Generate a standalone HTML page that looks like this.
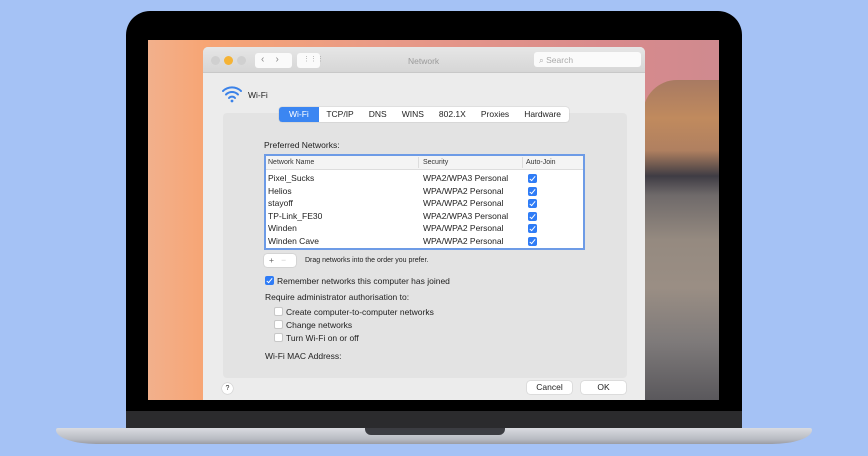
<!DOCTYPE html>
<html><head><style>
*{margin:0;padding:0;box-sizing:border-box}
body{width:868px;height:456px;background:#a5c2f5;position:relative;overflow:hidden;font-family:"Liberation Sans",sans-serif;color:#222}
.abs{position:absolute}
.bezel{left:126px;top:11px;width:616px;height:420px;background:#000;border-radius:24px 24px 0 0}
.chin{left:126px;top:411px;width:616px;height:18px;background:#2b2b2d}
.base{left:56px;top:428px;width:756px;height:16px;background:linear-gradient(#d9dbe0,#b8bbc2 70%,#9a9ca3);border-radius:2px 2px 40px 40px/2px 2px 14px 14px}
.notch{left:365px;top:428px;width:140px;height:7px;background:#3c3d42;border-radius:0 0 6px 6px}
.screen{left:148px;top:40px;width:571px;height:360px;background:linear-gradient(90deg,#f2b08c,#f7a574 10%,#e99a86 40%,#d98a8c 80%,#cf8a8f);overflow:hidden}
.rock{left:495px;top:40px;width:76px;height:320px;background:linear-gradient(180deg,#a87a62 0,#c08a5e 12%,#b08060 22%,#3f3c44 30%,#6f6a6a 36%,#958a80 50%,#9a8e84 65%,#7e7a7a 82%,#5a585c 100%);border-radius:34px 0 0 0}
.win{left:55px;top:7px;width:442px;height:360px;background:#ececec;border-radius:5px 5px 0 0;overflow:hidden}
.title{left:0;top:0;width:442px;height:26px;background:linear-gradient(#e6e6e6,#d6d6d6);border-bottom:1px solid #c8c8c8}
.dot{width:9px;height:9px;border-radius:50%;top:9px;background:#d0d0d0}
.btn{background:#fafafa;border-radius:3px;height:15px;top:6px}
.t{font-size:8.5px;white-space:nowrap}
.group{left:20px;top:66px;width:404px;height:265px;background:#e3e3e3;border-radius:4px}
.tabs{left:76px;top:60px;height:15px;background:#fff;border-radius:3px;box-shadow:0 0 1px #999;display:flex;font-size:8.5px}
.tabs span{padding:2px 7.5px;line-height:11px}
.table{left:61px;top:107px;width:321px;height:96px;border:2px solid #6d9be6;background:#fff}
.hdr{height:14px;background:#f4f4f4;border-bottom:1px solid #ddd;font-size:7px;color:#333}
.row{height:12.6px;font-size:8.5px;position:relative}
.cb{width:9px;height:9px;border-radius:2px;background:#2f7cf6;position:absolute}
.cb:after{content:"";position:absolute;left:3px;top:1px;width:2px;height:5px;border:solid #fff;border-width:0 1.3px 1.3px 0;transform:rotate(40deg)}
.ecb{width:9px;height:9px;border-radius:2px;background:#fff;border:1px solid #c8c8c8;position:absolute}
.pb{background:#fff;border-radius:3px;box-shadow:0 0 1px #888;font-size:8.5px;text-align:center;line-height:13px;height:13px}
</style></head><body>
<div class="abs bezel"></div>
<div class="abs chin"></div>
<div class="abs base"></div>
<div class="abs notch"></div>
<div class="abs screen">
 <div class="abs rock"></div>
 <div class="abs win">
  <div class="abs title"></div>
  <div class="abs dot" style="left:8px"></div>
  <div class="abs dot" style="left:21px;background:#f5b335"></div>
  <div class="abs dot" style="left:34px"></div>
  <div class="abs btn" style="left:52px;width:37px"></div>
  <div class="abs t" style="left:58px;top:7px;color:#888;font-size:10px">‹&nbsp;&nbsp;&nbsp;&nbsp;›</div>
  <div class="abs btn" style="left:94px;width:23px"></div>
  <div class="abs t" style="left:100px;top:8px;color:#aaa;font-size:7px">⋮⋮⋮</div>
  <div class="abs t" style="left:205px;top:9px;color:#9a9a9a">Network</div>
  <div class="abs btn" style="left:331px;width:107px;top:5px"></div>
  <div class="abs t" style="left:336px;top:8px;color:#aaa">⌕ Search</div>
  <svg class="abs" style="left:18px;top:38px" width="22" height="18" viewBox="0 0 22 18"><g fill="none" stroke="#3b82e8" stroke-width="2" stroke-linecap="round"><path d="M2 6a13 13 0 0 1 18 0"/><path d="M5 9.5a8.5 8.5 0 0 1 12 0"/><path d="M8 13a4 4 0 0 1 6 0"/></g><circle cx="11" cy="16" r="1.4" fill="#3b82e8"/></svg>
  <div class="abs t" style="left:45px;top:43px">Wi-Fi</div>
  <div class="abs group"></div>
  <div class="abs tabs"><span style="background:#3b86f2;color:#fff;border-radius:3px 0 0 3px;padding:2px 10px">Wi-Fi</span><span>TCP/IP</span><span>DNS</span><span>WINS</span><span>802.1X</span><span>Proxies</span><span>Hardware</span></div>
  <div class="abs t" style="left:61px;top:93px">Preferred Networks:</div>
  <div class="abs table">
   <div class="hdr" style="position:relative"><span class="abs" style="left:2px;top:3px">Network Name</span><span class="abs" style="left:157px;top:3px">Security</span><span class="abs" style="left:260px;top:3px">Auto-Join</span><span class="abs" style="left:152px;top:1px;width:1px;height:11px;background:#ddd"></span><span class="abs" style="left:256px;top:1px;width:1px;height:11px;background:#ddd"></span></div>
   <div style="padding-top:3px">
   <div class="row"><span class="abs" style="left:2px">Pixel_Sucks</span><span class="abs" style="left:157px">WPA2/WPA3 Personal</span><i class="cb" style="left:262px;top:1px"></i></div>
   <div class="row"><span class="abs" style="left:2px">Helios</span><span class="abs" style="left:157px">WPA/WPA2 Personal</span><i class="cb" style="left:262px;top:1px"></i></div>
   <div class="row"><span class="abs" style="left:2px">stayoff</span><span class="abs" style="left:157px">WPA/WPA2 Personal</span><i class="cb" style="left:262px;top:1px"></i></div>
   <div class="row"><span class="abs" style="left:2px">TP-Link_FE30</span><span class="abs" style="left:157px">WPA2/WPA3 Personal</span><i class="cb" style="left:262px;top:1px"></i></div>
   <div class="row"><span class="abs" style="left:2px">Winden</span><span class="abs" style="left:157px">WPA/WPA2 Personal</span><i class="cb" style="left:262px;top:1px"></i></div>
   <div class="row"><span class="abs" style="left:2px">Winden Cave</span><span class="abs" style="left:157px">WPA/WPA2 Personal</span><i class="cb" style="left:262px;top:1px"></i></div>
   </div>
  </div>
  <div class="abs pb" style="left:61px;top:207px;width:32px;color:#666;text-align:left;padding-left:5px">+&nbsp;&nbsp;&nbsp;<span style="color:#ccc">−</span></div>
  <div class="abs t" style="left:102px;top:210px;font-size:7px">Drag networks into the order you prefer.</div>
  <i class="cb" style="left:62px;top:229px"></i>
  <div class="abs t" style="left:74px;top:229px">Remember networks this computer has joined</div>
  <div class="abs t" style="left:62px;top:245px">Require administrator authorisation to:</div>
  <i class="ecb" style="left:71px;top:260px"></i><div class="abs t" style="left:83px;top:260px">Create computer-to-computer networks</div>
  <i class="ecb" style="left:71px;top:273px"></i><div class="abs t" style="left:83px;top:273px">Change networks</div>
  <i class="ecb" style="left:71px;top:286px"></i><div class="abs t" style="left:83px;top:286px">Turn Wi-Fi on or off</div>
  <div class="abs t" style="left:62px;top:304px">Wi-Fi MAC Address:</div>
  <div class="abs pb" style="left:19px;top:336px;width:11px;height:11px;line-height:11px;border-radius:50%;font-size:7px">?</div>
  <div class="abs pb" style="left:324px;top:334px;width:45px">Cancel</div>
  <div class="abs pb" style="left:378px;top:334px;width:45px">OK</div>
 </div>
</div>
</body></html>
